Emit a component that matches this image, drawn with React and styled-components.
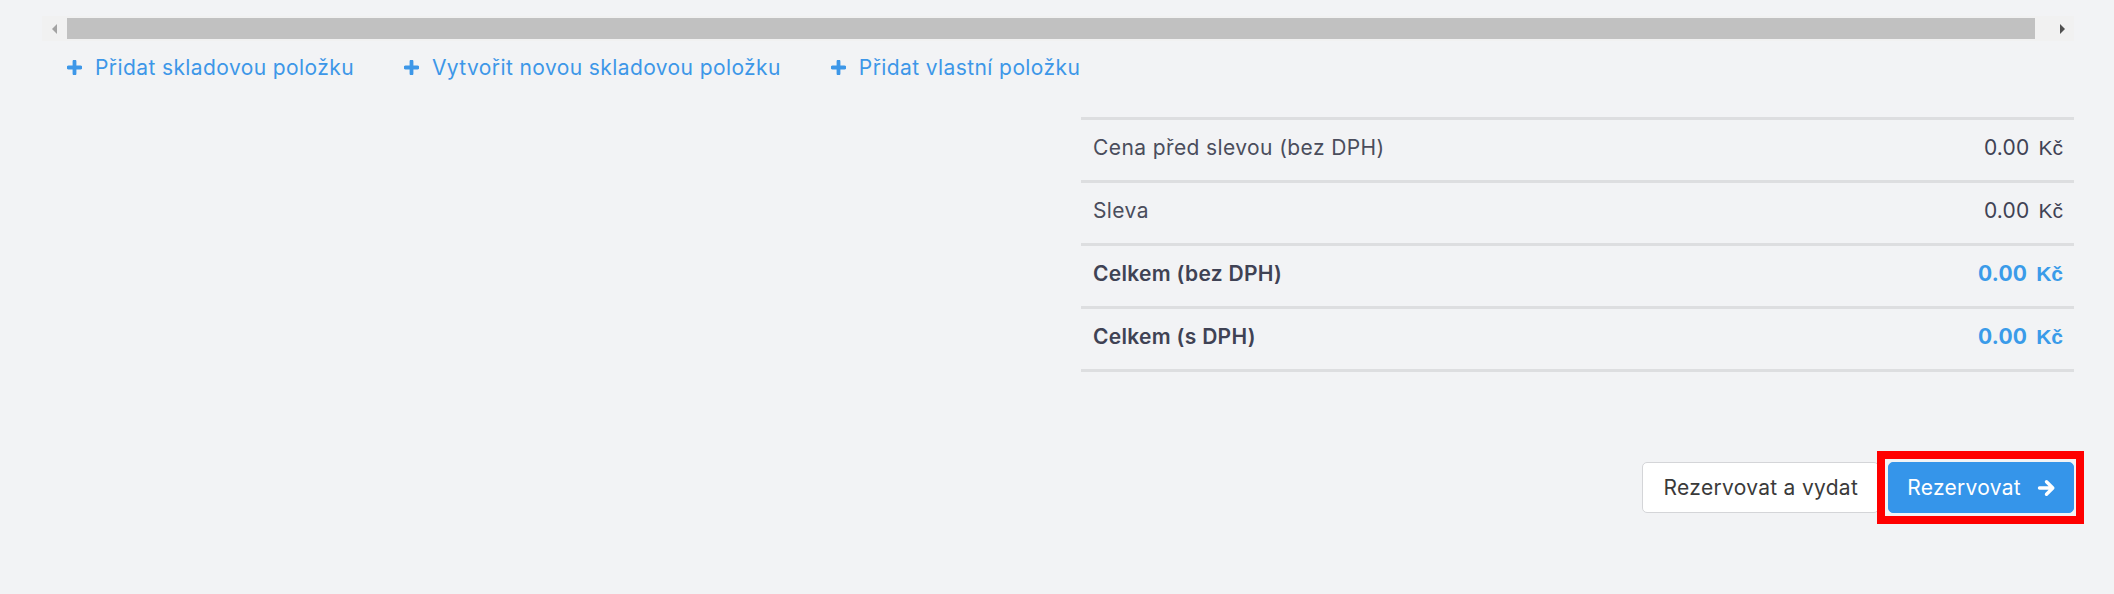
import React from "react";
import styled, { createGlobalStyle } from "styled-components";

const Global = createGlobalStyle`
  html, body { margin: 0; padding: 0; background: #f2f3f5; }
  body { font-family: Inter, "Open Sans", sans-serif; }
`;

const Page = styled.div`
  padding: 16px 40px 0 42px;
  height: 594px;
  box-sizing: border-box;
  display: flex;
  flex-direction: column;
`;

const Scrollbar = styled.div`
  display: flex;
  height: 25px;
  background: #f1f1f1;
`;

const ScrollArrow = styled.div`
  width: 25px;
  flex: none;
  display: flex;
  align-items: center;
  justify-content: center;
  svg { display: block; }
`;

const Track = styled.div`
  flex: 1;
  display: flex;
  align-items: center;
  padding-right: 14px;
`;

const Thumb = styled.div`
  flex: 1;
  height: 21px;
  background: #c1c1c1;
`;

const LinkRow = styled.div`
  display: flex;
  gap: 50px;
  padding-left: 25px;
  margin-top: 14px;
  height: 24px;
  align-items: center;
`;

const AddLink = styled.a`
  display: flex;
  align-items: center;
  gap: 13px;
  color: #3d97e8;
  font-size: 21px;
  letter-spacing: 0.4px;
  text-decoration: none;
  white-space: nowrap;
  cursor: pointer;
`;

const SummaryWrap = styled.div`
  display: flex;
  justify-content: flex-end;
  margin-top: 38px;
`;

const Summary = styled.div`
  width: 993px;
  border-bottom: 3px solid #dddee0;
`;

const Row = styled.div`
  display: flex;
  justify-content: space-between;
  align-items: center;
  height: 63px;
  box-sizing: border-box;
  border-top: 3px solid #dddee0;
  padding: 0 11px 5px 12px;
  font-size: 21px;
  letter-spacing: ${(p) => (p.$bold ? "0.3px" : "0.4px")};
  color: ${(p) => (p.$bold ? "#3f4254" : "#4a4d5c")};
  font-weight: ${(p) => (p.$bold ? 600 : 400)};
`;

const Value = styled.span`
  display: flex;
  align-items: baseline;
  gap: 9px;
  letter-spacing: 0.2px;
  color: ${(p) => (p.$accent ? "#3a9be9" : "#3f4254")};
  font-weight: ${(p) => (p.$accent ? 700 : 400)};
`;

const Currency = styled.span`
  font-family: "Liberation Sans", Arial, sans-serif;
  font-size: 21px;
  letter-spacing: 0;
`;

const Actions = styled.div`
  display: flex;
  justify-content: flex-end;
  gap: 9px;
  margin-top: 90px;
`;

const Button = styled.button`
  position: relative;
  height: 51px;
  box-sizing: border-box;
  display: flex;
  align-items: center;
  gap: 16px;
  padding: ${(p) => (p.$primary ? "0 17px 0 18px" : "0 20px 0 21px")};
  font-family: inherit;
  font-size: 21px;
  letter-spacing: 0.3px;
  border-radius: 5px;
  cursor: pointer;
  border: 1px solid ${(p) => (p.$primary ? "#3595ea" : "#d4d5d8")};
  background: ${(p) => (p.$primary ? "#3595ea" : "#ffffff")};
  color: ${(p) => (p.$primary ? "#ffffff" : "#3a3a3a")};
`;

const Highlight = styled.span`
  position: absolute;
  top: -12px;
  left: -12px;
  right: -11px;
  bottom: -12px;
  border: 8px solid #ff0000;
  pointer-events: none;
`;

const Plus = () => (
  <svg width="15" height="15" viewBox="0 0 15 15">
    <path d="M7.5 1.5v12M1.5 7.5h12" stroke="#3d97e8" strokeWidth="3.8" strokeLinecap="round" />
  </svg>
);

const ArrowRight = () => (
  <svg width="19" height="18" viewBox="0 0 19 18">
    <path d="M2.5 9h13M9.5 2.8 15.8 9l-6.3 6.2" stroke="#fff" strokeWidth="3.4" fill="none" strokeLinecap="round" strokeLinejoin="round" />
  </svg>
);

const rows = [
  { label: "Cena před slevou (bez DPH)", value: "0.00" },
  { label: "Sleva", value: "0.00" },
  { label: "Celkem (bez DPH)", value: "0.00", bold: true },
  { label: "Celkem (s DPH)", value: "0.00", bold: true },
];

export default function App() {
  return (
    <>
      <Global />
      <Page>
        <Scrollbar>
          <ScrollArrow>
            <svg width="6" height="10" viewBox="0 0 6 10"><path d="M5 0v10L0 5z" fill="#a3a3a3" /></svg>
          </ScrollArrow>
          <Track><Thumb /></Track>
          <ScrollArrow>
            <svg width="6" height="10" viewBox="0 0 6 10"><path d="M1 0v10l5-5z" fill="#505050" /></svg>
          </ScrollArrow>
        </Scrollbar>
        <LinkRow>
          <AddLink><Plus />Přidat skladovou položku</AddLink>
          <AddLink><Plus />Vytvořit novou skladovou položku</AddLink>
          <AddLink><Plus />Přidat vlastní položku</AddLink>
        </LinkRow>
        <SummaryWrap>
          <Summary>
            {rows.map((r) => (
              <Row key={r.label} $bold={r.bold}>
                <span>{r.label}</span>
                <Value $accent={r.bold}>
                  <span>{r.value}</span>
                  <Currency>Kč</Currency>
                </Value>
              </Row>
            ))}
          </Summary>
        </SummaryWrap>
        <Actions>
          <Button>Rezervovat a vydat</Button>
          <Button $primary>
            Rezervovat <ArrowRight />
            <Highlight />
          </Button>
        </Actions>
      </Page>
    </>
  );
}
